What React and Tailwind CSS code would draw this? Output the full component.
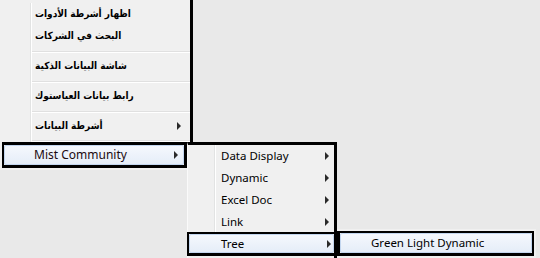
import React from "react";

const latin = { fontFamily: '"Noto Sans", "Open Sans", sans-serif' };
const arabic = { fontFamily: '"DejaVu Sans Condensed", "DejaVu Sans", sans-serif' };

function Arrow() {
  return (
    <span className="block w-0 h-0 border-y-[4px] border-y-transparent border-l-[4px] border-l-[#2a2a2a]" />
  );
}

function Row1({ text, ar, arrow }) {
  return (
    <div className="flex h-[22px]">
      <div className="w-[31px] shrink-0 border-r border-[#e2e3e3]" />
      <div className="w-px bg-white" />
      <div className="flex-1 flex items-center pl-[3px] pr-[9px] text-black">
        {ar ? (
          <span dir="rtl" className="text-[10px] font-bold leading-none" style={arabic}>
            {text}
          </span>
        ) : (
          <span className="text-[11.5px] leading-none" style={latin}>{text}</span>
        )}
        <div className="flex-1" />
        {arrow && <Arrow />}
      </div>
    </div>
  );
}

function Sep({ h = "h-[8px]", pt = "pt-[4px]" }) {
  return (
    <div className={`flex ${h}`}>
      <div className="w-[31px] shrink-0 border-r border-[#e2e3e3]" />
      <div className="w-px bg-white" />
      <div className={`flex-1 ${pt}`}>
        <div className="h-px bg-[#e0e0e0]" />
        <div className="h-px bg-white" />
      </div>
    </div>
  );
}

function Highlight({ children, className = "" }) {
  return (
    <div className={`border-black ${className}`}>
      <div className="h-full rounded-[2px] border border-[#c3d6ef] bg-gradient-to-b from-[#f5f8fd] to-[#e5edf8] flex items-center">
        {children}
      </div>
    </div>
  );
}

function Row2({ text }) {
  return (
    <div className="flex h-[22px]">
      <div className="w-[27px] shrink-0 border-r border-[#e2e3e3]" />
      <div className="w-px bg-white" />
      <div className="flex-1 flex items-center pl-[5px] pr-[5px] text-black">
        <span className="text-[11.5px] leading-none" style={latin}>{text}</span>
        <div className="flex-1" />
        <Arrow />
      </div>
    </div>
  );
}

export default function App() {
  return (
    <div className="relative w-[540px] h-[258px] overflow-hidden bg-[#e9e9e9]">
      {/* Menu 1 */}
      <div className="absolute left-0 top-0 w-[193px] bg-[#f0f0f0] border-r-[3px] border-black pt-[3px] pb-[2px]">
        <Row1 ar text="اظهار أشرطة الأدوات" />
        <Row1 ar text="البحث في الشركات" />
        <Sep />
        <Row1 ar text="شاشة البيانات الذكية" />
        <Sep />
        <Row1 ar text="رابط بيانات العياستوك" />
        <Sep />
        <Row1 ar text="أشرطة البيانات" arrow />
        <Sep h="h-[5px]" pt="pt-[3px]" />
        <Highlight className="ml-[2px] mr-[3px] h-[26px] border-[3px] border-l-2">
          <div className="flex-1 flex items-center pl-[29px] pr-[5px]">
            <span className="text-[12px] leading-none text-[#1a0a10]" style={latin}>Mist Community</span>
            <div className="flex-1" />
            <Arrow />
          </div>
        </Highlight>
      </div>

      {/* Submenu 2 */}
      <div className="absolute left-[187px] top-[142px] w-[150px] h-[130px] bg-[#f0f0f0] border-t-[3px] border-r-[3px] border-black border-l border-l-[#fafafa]">
        <Row2 text="Data Display" />
        <Row2 text="Dynamic" />
        <Row2 text="Excel Doc" />
        <div className="h-[21px] overflow-hidden">
          <Row2 text="Link" />
        </div>
        <Highlight className="-ml-px -mr-[3px] h-[24px] border-2 border-r-[3px] border-b-[3px]">
          <div className="flex-1 flex items-center pl-[31px] pr-[2px]">
            <span className="text-[11.5px] leading-none text-black" style={latin}>Tree</span>
            <div className="flex-1" />
            <Arrow />
          </div>
        </Highlight>
      </div>

      {/* Submenu 3 */}
      <div className="absolute left-[337px] top-[229px] w-[199px] h-[40px] bg-[#f0f0f0] pt-[2px]">
        <Highlight className="w-[197px] h-[25px] border-2 border-l-[3px] border-b-[3px]">
          <div className="flex-1 flex items-center pl-[30px]">
            <span className="text-[11.5px] leading-none text-black" style={latin}>Green Light Dynamic</span>
          </div>
        </Highlight>
      </div>
    </div>
  );
}
